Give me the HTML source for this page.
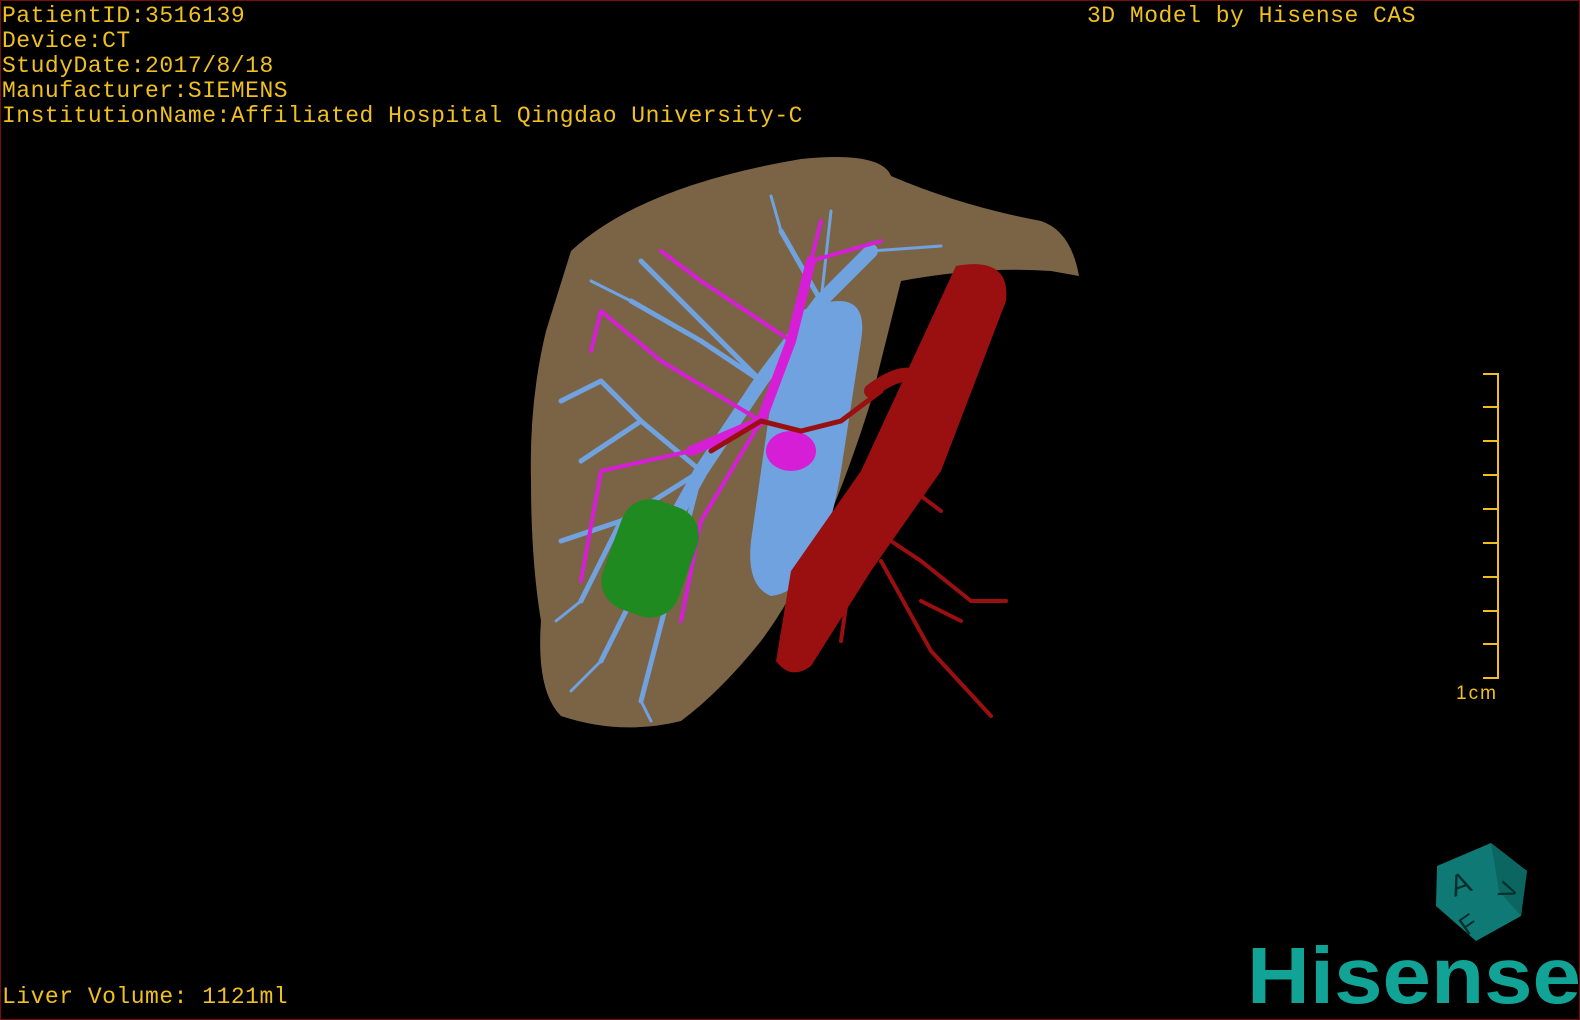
<!DOCTYPE html>
<html><head><style>
html,body{margin:0;padding:0;background:#000;}
#w{position:relative;width:1578px;height:1018px;border:1px solid #7a0c0c;overflow:hidden;background:#000;}
.t{position:absolute;font-family:"Liberation Mono",monospace;color:#f0c020;font-size:23px;line-height:25px;white-space:pre;letter-spacing:0.5px;}
</style></head><body><div id="w">
<div class="t" style="left:1px;top:3px">PatientID:3516139
Device:CT
StudyDate:2017/8/18
Manufacturer:SIEMENS
InstitutionName:Affiliated Hospital Qingdao University-C</div>
<div class="t" style="left:1086px;top:3px">3D Model by Hisense CAS</div>
<div class="t" style="left:1px;top:984px">Liver Volume: 1121ml</div>
<svg width="1580" height="1020" style="position:absolute;left:0;top:0">
<path d="M570 250 Q640 185 800 158 Q880 150 890 175 Q960 205 1040 220 Q1070 230 1078 275 L1050 270 Q980 265 900 280 L870 400 Q820 560 760 640 Q720 690 680 720 Q620 735 560 715 Q535 690 540 620 Q530 560 530 480 Q528 400 545 330 Z" fill="#7b6446"/>
<g stroke="#6fa2de" fill="none" stroke-linecap="round">
<path d="M650 560 L700 470 L760 380 L820 300 L870 250" stroke-width="14"/>
<path d="M700 470 L640 420 L600 380 M700 470 L620 520 L580 600 M760 380 L700 340 L630 300 M820 300 L780 230 M760 380 L640 260 M650 560 L600 660 M700 470 L640 700 M620 520 L560 540 M600 380 L560 400 M640 420 L580 460" stroke-width="5"/>
<path d="M600 660 L570 690 M630 300 L590 280 M780 230 L770 195 M820 300 L830 210 M580 600 L555 620 M640 700 L650 720 M870 250 L940 245" stroke-width="3"/>
<path d="M800 310 Q870 280 860 340 L840 470 Q820 590 770 595 Q745 585 750 540 L770 400 Z" fill="#6fa2de" stroke="none"/>
</g>
<g stroke="#d61ed6" fill="none" stroke-linecap="round">
<path d="M690 450 L760 420 L790 340 L810 260" stroke-width="10"/>
<path d="M760 420 L660 360 L600 310 M790 340 L700 280 M760 420 L700 520 L680 620 M690 450 L600 470 L580 580 M810 260 L880 240 M700 280 L660 250 M600 310 L590 350 M810 260 L820 220" stroke-width="4"/>
<ellipse cx="790" cy="450" rx="25" ry="20" fill="#d61ed6" stroke="none"/>
</g>
<g fill="#1f8a1f"><rect x="610" y="500" width="80" height="115" rx="30" transform="rotate(20 650 555)"/></g>
<g fill="#9a0f0f" stroke="#9a0f0f" stroke-linecap="round">
<path d="M955 265 Q1010 255 1005 300 L940 470 L870 570 L810 665 Q790 680 775 660 L790 570 L860 470 Z" stroke="none"/>
<path d="M870 390 Q910 360 925 385 Q930 420 900 420" stroke-width="14" fill="none"/>
<path d="M880 390 L840 420 L800 430 L760 420 L710 450" stroke-width="5" fill="none"/>
<path d="M860 520 L920 560 L970 600 L1005 600 M880 560 L930 650 L990 715 M850 570 L840 640 M900 480 L940 510 M920 600 L960 620" stroke-width="4" fill="none"/>
</g>
<g stroke="#f0c020" stroke-width="2" fill="none">
<path d="M1482 373 H1497 V677 H1482"/>
<path d="M1482 406 H1497 M1482 440 H1497 M1482 474 H1497 M1482 508 H1497 M1482 542 H1497 M1482 576 H1497 M1482 610 H1497 M1482 643 H1497"/>
</g>
<text x="1455" y="698" fill="#f0c020" font-family="Liberation Sans,sans-serif" font-size="19" letter-spacing="2">1cm</text>
<polygon points="1436,865 1490,842 1526,870 1520,915 1475,940 1435,905" fill="#0f7a75"/>
<polygon points="1490,842 1526,870 1520,915 1498,890" fill="#0b6561"/>
<text x="1450" y="893" font-family="Liberation Sans,sans-serif" font-size="30" fill="#062e2c" transform="rotate(-20 1460 885)">A</text>
<text x="1458" y="930" font-family="Liberation Sans,sans-serif" font-size="26" fill="#062e2c" transform="rotate(-35 1470 920)">F</text>
<text x="1500" y="897" font-family="Liberation Sans,sans-serif" font-size="24" fill="#062e2c" transform="rotate(-70 1508 890)">V</text>
<text x="1246" y="1002" font-family="Liberation Sans,sans-serif" font-weight="bold" font-size="80" fill="#11a396" textLength="334" lengthAdjust="spacingAndGlyphs">Hisense</text>
</svg>
</div></body></html>
